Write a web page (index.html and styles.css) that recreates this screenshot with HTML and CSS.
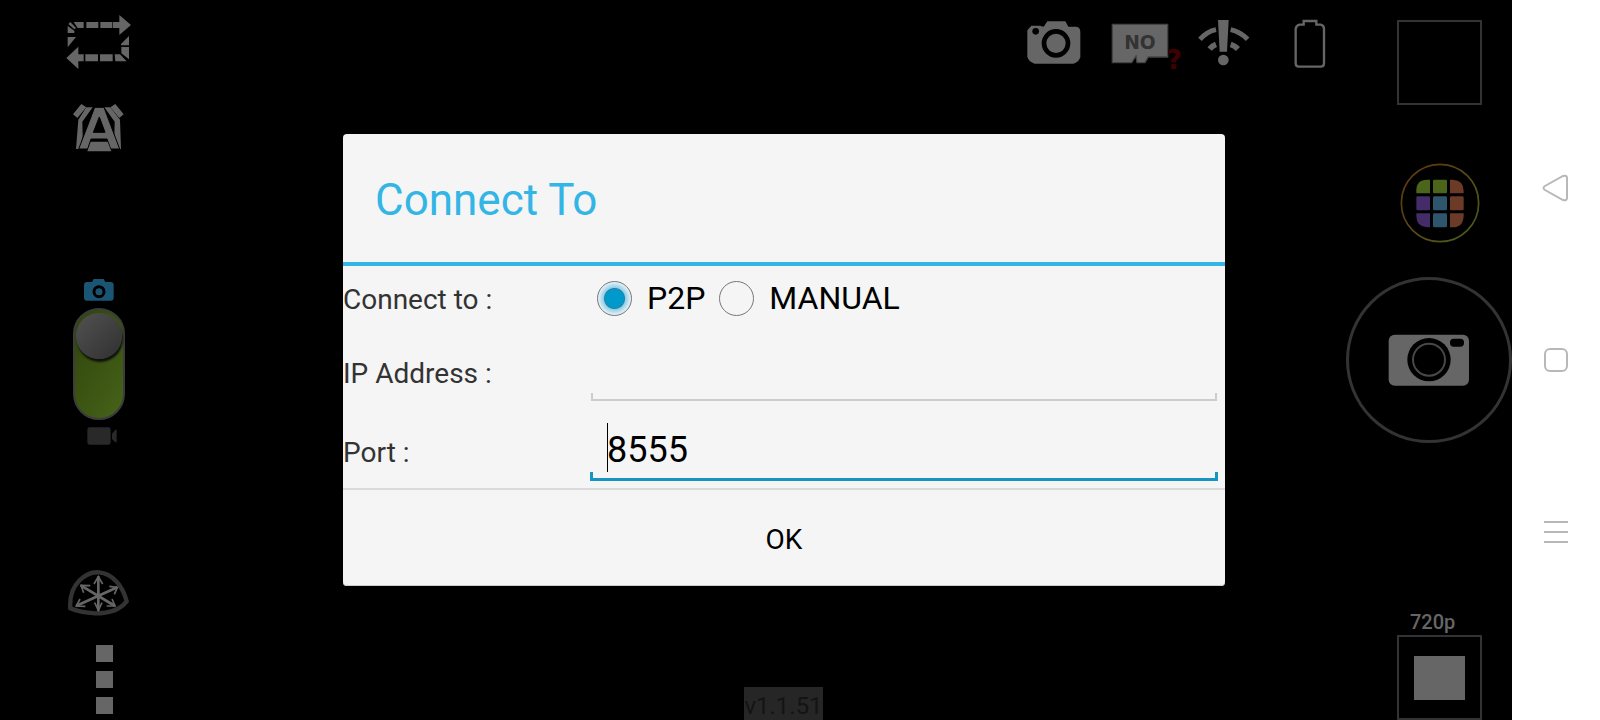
FILE: index.html
```html
<!DOCTYPE html>
<html lang="en">
<head>
    <meta charset="UTF-8">
    <meta name="viewport" content="width=device-width, initial-scale=1.0">
    <title>Connect To</title>
    <link rel="stylesheet" href="styles.css">
</head>
<body>
    <main class="camera">
        <div class="rail-left">
            <div class="rail-group rail-top">
                <button type="button" aria-label="Switch camera">
                    <svg width="66" height="56" viewBox="45 42 198 168" fill="#666">
                        <path d="M205 45L240 75L205 105V84H186V66H205zM148 66H184V84H148zM106 66H142V84H106zM68 66H98V84H80zM58 66L75 84L70 88L52 72zM50 78L70 92V99H50zM50 111H75L50 142z"/>
                        <path d="M82 140V163H98V184H82V207L46 174zM103 163H141V184H103zM147 163H185V184H147zM191 163H207L227 184H193zM234 108V136H210V132zM211 141H234V178L211 160z"/>
                    </svg>
                </button>
                <button type="button" aria-label="Stabilization">
                    <svg width="54" height="50" viewBox="66 310 162 150" fill="#666">
                        <path d="M94 313L109 323L82 355L69 344zM196 313L181 323L208 355L221 344z"/>
                        <path d="M109 323H128L97 366L98 410L89 448H78L85 360zM163 323H181L210 360L213 448H203L193 410L194 366z"/>
                        <path d="M134 323H162L209 448H182L171 418H123L113 448H86zM148 352L130 398H165z" fill-rule="evenodd" stroke="#000" stroke-width="3"/>
                        <path d="M122 426H173L184 455H112z"/>
                    </svg>
                </button>
            </div>
            <div class="rail-group rail-mode">
                <svg width="30" height="23" viewBox="103 45 90 69" fill="#1a5574">
                    <path d="M112 57H127L132 48H162L167 57H183Q192 57 192 66V104Q192 113 183 113H112Q103 113 103 104V66Q103 57 112 57z"/>
                    <circle cx="148" cy="86" r="15" fill="none" stroke="#000" stroke-width="9"/>
                </svg>
                <button type="button" class="mode-switch" aria-label="Photo or video mode"><span></span></button>
                <svg class="video" width="30" height="18" viewBox="111 499 90 54" fill="#292929">
                    <rect x="112" y="500" width="70" height="52" rx="7"/>
                    <path d="M186 519L196 507H200V545H196L186 535z"/>
                </svg>
            </div>
            <div class="rail-group rail-bottom">
                <button type="button" aria-label="Pan and tilt">
                    <svg width="62" height="49" viewBox="55 25 186 147" fill="none" stroke="#666" stroke-width="8">
                        <path d="M62 143C56 68 112 32 148 35C187 38 219 74 231 122Q203 158 137 158Q90 156 62 143z" stroke="#333" stroke-width="13"/>
                        <path d="M146 47V150M93 74L196 136M203 80L79 136"/>
                        <path d="M133 70L146 48L159 70M135 126L146 149L157 126M102 96L94 74L122 75M171 136H196L187 115M179 77L203 80L194 101M91 115L80 136L107 137" stroke-width="5"/>
                    </svg>
                </button>
                <button type="button" class="more" aria-label="More"><i></i><i></i><i></i></button>
            </div>
        </div>

        <div class="preview">
            <div class="status">
                <svg width="54" height="46" viewBox="53 57 162 138">
                    <path d="M66 77H91L103 80L114 64H168L177 80H198Q213 80 213 96V172Q207 188 192 191H76Q59 186 54 171V91z" fill="#666"/>
                    <circle cx="79" cy="94" r="10"/>
                    <circle cx="140" cy="130" r="36" fill="none" stroke="#000" stroke-width="14"/>
                </svg>
                <svg width="76" height="60" viewBox="304 57 228 180">
                    <path d="M308 73H474V171H416L406 188H382L379 168L366 188H308z" fill="#666" stroke="#444" stroke-width="4"/>
                    <text x="391" y="148" class="card-no">NO</text>
                    <text x="494" y="207" class="card-mark">?</text>
                </svg>
                <svg width="52" height="48" viewBox="566 57 156 144" fill="#666">
                    <path d="M626 60H658L653 155H631z"/>
                    <circle cx="642" cy="180" r="16"/>
                    <path d="M572 118Q594 94 620 89M664 89Q692 95 715 118" fill="none" stroke="#666" stroke-width="15"/>
                    <path d="M601 147Q609 137 620 133M664 133Q676 137 686 147" fill="none" stroke="#666" stroke-width="17"/>
                </svg>
                <svg class="battery" width="32" height="50" viewBox="853 57 96 150" fill="none" stroke="#666" stroke-width="7">
                    <path d="M882 63H920V74H933Q943 76 943 86V190Q943 200 933 200H868Q858 200 858 190V86Q860 76 870 74H882z"/>
                </svg>
            </div>
            <span class="version">v1.1.51</span>
        </div>

        <div class="rail-right">
            <button type="button" class="frame" aria-label="Gallery"></button>
            <button type="button" class="effects" aria-label="Effects">
                <svg width="80" height="80" viewBox="211 488 240 240">
                    <defs>
                        <linearGradient id="ring" x1="0" y1="0" x2="1" y2="1">
                            <stop offset="0" stop-color="#63330f"/>
                            <stop offset="1" stop-color="#4b601a"/>
                        </linearGradient>
                    </defs>
                    <circle cx="331" cy="608" r="116" fill="none" stroke="url(#ring)" stroke-width="5"/>
                    <path d="M260 579V570Q260 538 292 538H301V579z" fill="#4b651b"/>
                    <rect x="310" y="538" width="42" height="41" rx="4" fill="#4b651b"/>
                    <path d="M361 579V538H370Q402 540 402 572V579z" fill="#6b3b28"/>
                    <rect x="260" y="588" width="41" height="42" rx="4" fill="#432c68"/>
                    <rect x="310" y="588" width="42" height="42" rx="4" fill="#2e556c"/>
                    <rect x="361" y="588" width="41" height="42" rx="4" fill="#6b3b28"/>
                    <path d="M260 639H301V681H292Q260 679 260 647z" fill="#432c68"/>
                    <rect x="310" y="639" width="42" height="42" rx="4" fill="#2e556c"/>
                    <path d="M361 639H402V647Q400 681 370 681H361z" fill="#6b3b28"/>
                </svg>
            </button>
            <button type="button" class="shutter" aria-label="Take photo">
                <svg width="82" height="52" viewBox="173 220 246 156">
                    <rect x="175" y="222" width="241" height="153" rx="18" fill="#666"/>
                    <circle cx="296" cy="297" r="65"/>
                    <circle cx="296" cy="297" r="48" fill="none" stroke="#484848" stroke-width="6"/>
                    <rect x="359" y="234" width="42" height="24" rx="11"/>
                </svg>
            </button>
            <div class="resolution">
                <span>720p</span>
                <button type="button" class="frame" aria-label="Resolution"><i></i></button>
            </div>
        </div>

        <div class="overlay">
            <form class="dialog" role="dialog" aria-labelledby="dialogTitle">
                <h1 id="dialogTitle">Connect To</h1>
                <div class="fields">
                    <div class="row row-radio" role="radiogroup" aria-labelledby="modeLabel">
                        <span id="modeLabel" class="label">Connect to :</span>
                        <div class="radios">
                            <label><input type="radio" name="mode" value="p2p" checked>P2P</label>
                            <label><input type="radio" name="mode" value="manual">MANUAL</label>
                        </div>
                    </div>
                    <div class="row">
                        <label class="label" for="ip">IP Address :</label>
                        <div class="field"><input type="text" id="ip"></div>
                    </div>
                    <div class="row">
                        <label class="label" for="port">Port :</label>
                        <div class="field active"><input type="text" id="port" value="8555"></div>
                    </div>
                </div>
                <button type="button" class="ok">OK</button>
            </form>
        </div>
    </main>

    <nav class="navbar">
        <button type="button" aria-label="Back">
            <svg width="28" height="28" viewBox="0 0 28 28"><path d="M3 12L21 2Q25 1 25 4V24Q25 27 21 26L3 16Q0 14 3 12z"/></svg>
        </button>
        <button type="button" aria-label="Home">
            <svg width="28" height="28" viewBox="0 0 28 28"><rect x="3" y="3" width="22" height="22" rx="5"/></svg>
        </button>
        <button type="button" aria-label="Recent apps">
            <svg width="28" height="28" viewBox="0 0 28 28"><path d="M2 4H26M2 14H26M2 24H26"/></svg>
        </button>
    </nav>
</body>
</html>
```

FILE: styles.css
```css
* {
    box-sizing: border-box;
}
body {
    margin: 0;
    display: flex;
    min-height: 100vh;
    font-family: Roboto, sans-serif;
    background: #000;
}
button {
    padding: 0;
    border: none;
    background: none;
    font-family: inherit;
    cursor: pointer;
}
svg {
    display: block;
}
.camera {
    position: relative;
    flex: 1;
    display: flex;
    background: #000;
}

/* left rail */
.rail-left {
    width: 197px;
    display: flex;
    flex-direction: column;
    justify-content: space-between;
    padding: 14px 0 6px;
}
.rail-group {
    display: flex;
    flex-direction: column;
    align-items: center;
}
.rail-top {
    gap: 33px;
}
.rail-mode {
    gap: 7px;
}
.video {
    margin-left: 6px;
}
.mode-switch {
    width: 52px;
    height: 112px;
    padding: 3px 1px;
    border: 2px solid #3c3c3c;
    border-radius: 26px;
    background: linear-gradient(120deg, #2f440a, #46631a);
}
.mode-switch span {
    display: block;
    width: 46px;
    height: 46px;
    margin-bottom: 56px;
    border-radius: 50%;
    background: linear-gradient(135deg, #525252, #303030);
    box-shadow: 1px 3px 2px #111;
}
.rail-bottom {
    gap: 27px;
}
.more {
    display: grid;
    gap: 9px;
    margin-left: 12px;
}
.more i {
    width: 17px;
    height: 17px;
    background: #666;
}

/* middle */
.preview {
    flex: 1;
    display: flex;
    flex-direction: column;
    justify-content: space-between;
    align-items: center;
    margin-left: 24px;
}
.status {
    align-self: flex-end;
    display: flex;
    align-items: flex-start;
    gap: 11px;
    padding: 19px 20px 0 0;
}
.status svg:first-child {
    margin-right: 19px;
}
.battery {
    margin-left: 33px;
}
.card-no {
    font: bold 56px "DejaVu Sans", sans-serif;
    fill: #333;
    text-anchor: middle;
}
.card-mark {
    font: bold 80px "DejaVu Sans", sans-serif;
    fill: #400000;
    text-anchor: middle;
}
.version {
    height: 33px;
    font-size: 24px;
    line-height: 38px;
    color: #141414;
    background: #262626;
}

/* right rail */
.rail-right {
    width: 166px;
    display: flex;
    flex-direction: column;
    align-items: flex-end;
    padding-top: 20px;
}
.frame {
    display: grid;
    place-items: center;
    width: 85px;
    height: 85px;
    margin-right: 30px;
    border: 2px solid #333;
}
.frame i {
    width: 51px;
    height: 44px;
    background: #666;
}
.effects {
    margin: 58px 32px 34px 0;
}
.shutter {
    display: grid;
    place-items: center;
    width: 166px;
    height: 166px;
    border: 3px solid #333;
    border-radius: 50%;
}
.resolution {
    margin-top: auto;
}
.resolution span {
    display: block;
    padding-left: 13px;
    font-size: 20px;
    font-weight: 500;
    line-height: 26px;
    color: #666;
}

/* dialog */
.overlay {
    position: absolute;
    inset: 0;
    display: flex;
    align-items: center;
    justify-content: center;
    padding-left: 56px;
}
.dialog {
    width: 882px;
    border-radius: 4px;
    background: #f5f5f5;
    box-shadow: inset 0 -1px #ccc;
}
.dialog h1 {
    margin: 0;
    padding: 4px 32px 0;
    border-bottom: 4px solid #33b5e5;
    font-size: 44px;
    font-weight: 400;
    line-height: 124px;
    color: #33b5e5;
}
.fields {
    border-bottom: 2px solid #dadada;
}
.row {
    display: flex;
    align-items: baseline;
    height: 79px;
    padding-right: 7px;
}
.row-radio {
    align-items: center;
    height: 64px;
}
.label {
    width: 247px;
    font-size: 28px;
    line-height: 36px;
    color: #333;
}
.row-radio .label {
    padding-top: 4px;
}
.radios {
    display: flex;
    gap: 14px;
    padding-left: 7px;
}
.radios label {
    display: flex;
    align-items: center;
    gap: 15px;
    font-size: 32px;
    line-height: 40px;
}
.radios input {
    appearance: none;
    width: 35px;
    height: 35px;
    margin: 0;
    border: 1px solid #777;
    border-radius: 50%;
}
.radios input:checked {
    background: radial-gradient(circle, #0099cc 9px, #2a7f9f 10px, #8fd0e8 11px, #e2eff5 16px);
}
.field {
    position: relative;
    flex: 1;
}
.field::before,
.field::after {
    content: "";
    position: absolute;
    left: 1px;
    right: 1px;
    bottom: 0;
    height: 6px;
    border: 2px solid #ccc;
    border-top: none;
    pointer-events: none;
}
.field input {
    display: block;
    width: 100%;
    height: 71px;
    padding: 11px 17px 0;
    border: none;
    outline: none;
    background: none;
    font-family: inherit;
    font-size: 36px;
    color: #000;
}
.field.active input {
    height: 72px;
    padding-top: 10px;
}
.field.active::after {
    left: 0;
    right: 0;
    border: 3px solid #1795c0;
    border-top: none;
}
/* text cursor */
.field.active::before {
    left: 17px;
    right: auto;
    bottom: 9px;
    width: 1px;
    height: 49px;
    border: none;
    background: #000;
}
.ok {
    display: block;
    width: 100%;
    height: 96px;
    padding-top: 2px;
    font-size: 28px;
    color: #000;
}

/* system navigation */
.navbar {
    width: 88px;
    display: flex;
    flex-direction: column;
    align-items: center;
    justify-content: center;
    gap: 100px;
    background: #fff;
}
.navbar button {
    display: grid;
    place-items: center;
    width: 72px;
    height: 72px;
}
.navbar svg {
    fill: none;
    stroke: #b8b8b8;
    stroke-width: 2;
}
```
